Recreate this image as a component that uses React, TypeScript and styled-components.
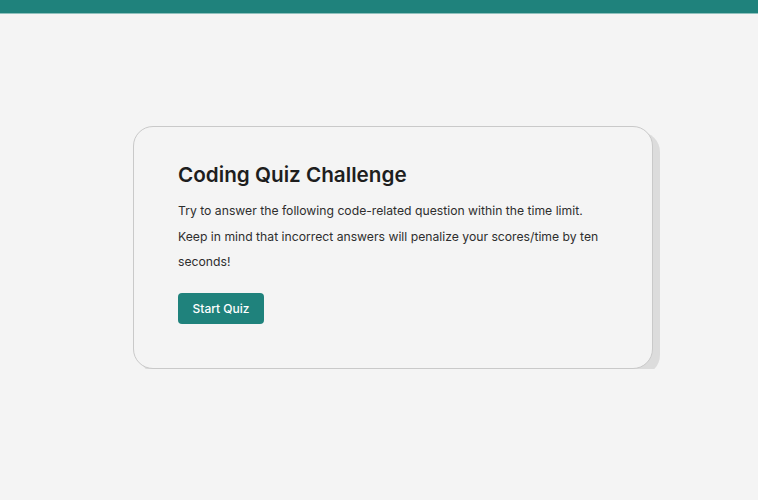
import React from "react";
import styled, { createGlobalStyle } from "styled-components";

const Global = createGlobalStyle`
  html, body { margin: 0; padding: 0; background: #f4f4f4; }
  body { font-family: Inter, "Noto Sans", sans-serif; color: #222; }
`;

const TopBar = styled.header`
  height: 13px;
  background: #1f827c;
  border-bottom: 1px solid #8fc1bd;
`;

const Main = styled.main`
  display: flex;
  padding: 112px 0 0 133px;
`;

const Card = styled.section`
  box-sizing: border-box;
  width: 520px;
  padding: 36px 44px 44px;
  border: 1px solid #c9c9c9;
  border-radius: 20px;
  background: #f4f4f4;
  box-shadow: 7px 6px 0 #dcdcdc;
`;

const Title = styled.h1`
  margin: 0;
  font-size: 20.7px;
  line-height: 24px;
  font-weight: 600;
  color: #1e1e1e;
`;

const Text = styled.p`
  margin: 11px 0 0;
  font-size: 12.2px;
  line-height: 25.5px;
  color: #2e2e2e;
  max-width: 434px;
`;

const Button = styled.button`
  margin-top: 18px;
  height: 31px;
  padding: 0 14.5px;
  border: none;
  border-radius: 4px;
  background: #1f827c;
  color: #fff;
  font-family: Inter, "Noto Sans", sans-serif;
  font-size: 12px;
  font-weight: 500;
  cursor: pointer;
`;

export default function App() {
  return (
    <>
      <Global />
      <TopBar />
      <Main>
        <Card>
          <Title>Coding Quiz Challenge</Title>
          <Text>
            Try to answer the following code-related question within the time limit.
            <br />
            Keep in mind that incorrect answers will penalize your scores/time by ten seconds!
          </Text>
          <Button>Start Quiz</Button>
        </Card>
      </Main>
    </>
  );
}
